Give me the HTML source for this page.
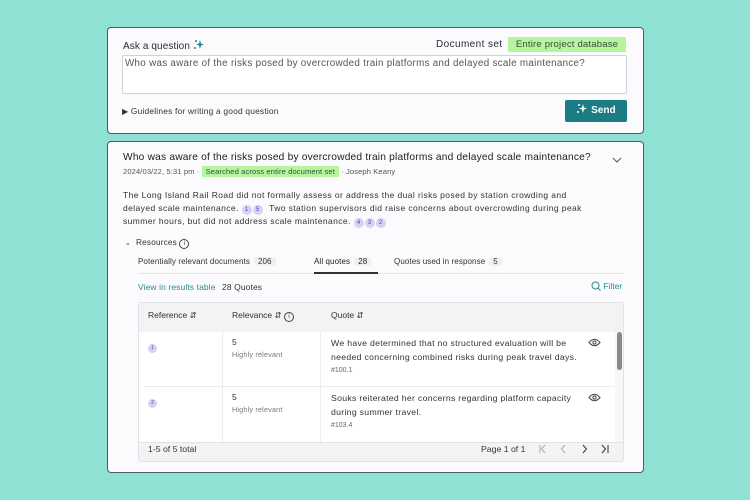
<!DOCTYPE html>
<html><head><meta charset="utf-8"><style>
*{box-sizing:border-box;margin:0;padding:0}
body{width:750px;height:500px;background:#8fe2d3;font-family:"Liberation Sans",sans-serif;color:#2b2b33;position:relative;overflow:hidden}
.card{position:absolute;background:#fbfafc;border:1px solid #4f5a5a;border-radius:4px}
.a{position:absolute;white-space:nowrap}
.badge{display:inline-block;width:10px;height:10px;border-radius:50%;background:#d9cff5;color:#5a3fa8;font-size:6px;text-align:center;line-height:10px;vertical-align:0px;margin-right:1px;letter-spacing:0}
.pill{display:inline-block;background:#eef0f2;border-radius:3px;padding:0 4px;margin-left:4px}
</style></head><body>
<div class="card" style="left:107px;top:27px;width:537px;height:107px"></div>
<div class="a" style="left:123px;top:39px;font-size:10px;letter-spacing:0.1px">Ask a question <svg width="12" height="11" viewBox="0 0 12 11" style="vertical-align:-1px"><path d="M7 1L8 4.5 11 5.5 8 6.5 7 10 6 6.5 3 5.5 6 4.5Z" fill="#1b8a8f"/><circle cx="3" cy="2" r="1" fill="#1b8a8f"/><circle cx="2" cy="9" r="1" fill="#1b8a8f"/></svg></div>
<div class="a" style="left:436px;top:39px;font-size:10px;letter-spacing:0.4px">Document set</div>
<div class="a" style="left:508px;top:37px;width:118px;height:15px;background:#b6f5a0;font-size:9.5px;line-height:15px;text-align:center;color:#3a4a3a;letter-spacing:0.2px">Entire project database</div>
<div class="a" style="left:122px;top:55px;width:505px;height:39px;background:#fff;border:1px solid #cfd2d6;border-radius:2px"></div>
<div class="a" style="left:125px;top:58px;font-size:9.8px;color:#555;letter-spacing:0.3px">Who was aware of the risks posed by overcrowded train platforms and delayed scale maintenance?</div>
<div class="a" style="left:122px;top:106px;font-size:8.4px;color:#333;letter-spacing:0.2px"><span style="font-size:8px">&#9654;</span> Guidelines for writing a good question</div>
<div class="a" style="left:565px;top:100px;width:62px;height:22px;background:#1b7c84;border-radius:2px;color:#fff;font-size:10px;font-weight:bold;line-height:22px;text-align:center"><svg width="12" height="11" viewBox="0 0 12 11" style="vertical-align:-1px"><path d="M7 1L8 4.5 11 5.5 8 6.5 7 10 6 6.5 3 5.5 6 4.5Z" fill="#fff"/><circle cx="3" cy="2" r="1" fill="#fff"/><circle cx="2" cy="9" r="1" fill="#fff"/></svg> Send</div>

<div class="card" style="left:107px;top:141px;width:537px;height:332px"></div>
<div class="a" style="left:123px;top:152px;font-size:10.2px;color:#222;letter-spacing:0.2px">Who was aware of the risks posed by overcrowded train platforms and delayed scale maintenance?</div>
<svg class="a" style="left:612px;top:157px" width="10" height="7"><path d="M1 1L5 5 9 1" fill="none" stroke="#555" stroke-width="1"/></svg>
<div class="a" style="left:123px;top:167px;font-size:7.6px;color:#555;line-height:10px;letter-spacing:0.1px">2024/03/22, 5:31 pm · <span style="background:#b6f5a0;padding:1px 4px;color:#355035">Searched across entire document set</span> · Joseph Keany</div>
<div class="a" style="left:123px;top:189px;font-size:8.5px;line-height:12.5px;color:#333;white-space:normal;width:475px;letter-spacing:0.4px">The Long Island Rail Road did not formally assess or address the dual risks posed by station crowding and delayed scale maintenance. <span class="badge">1</span><span class="badge">5</span> &nbsp;Two station supervisors did raise concerns about overcrowding during peak summer hours, but did not address scale maintenance. <span class="badge">4</span><span class="badge">3</span><span class="badge">2</span></div>
<div class="a" style="left:125px;top:238px;font-size:8.2px;color:#333;letter-spacing:0.2px"><span style="font-size:7px">&#8964;</span>&nbsp; Resources <span style="display:inline-block;width:10px;height:10px;border:1px solid #444;border-radius:50%;font-size:6px;text-align:center;line-height:9px">i</span></div>
<div class="a" style="left:138px;top:257px;font-size:8px;color:#333;letter-spacing:0.1px">Potentially relevant documents<span class="pill">206</span></div>
<div class="a" style="left:314px;top:257px;font-size:8px;color:#222;letter-spacing:0.1px">All quotes<span class="pill">28</span></div>
<div class="a" style="left:394px;top:257px;font-size:8px;color:#333;letter-spacing:0.1px">Quotes used in response<span class="pill">5</span></div>
<div class="a" style="left:138px;top:273px;width:486px;height:1px;background:#e6e6ea"></div>
<div class="a" style="left:314px;top:272px;width:64px;height:2px;background:#333"></div>
<div class="a" style="left:138px;top:282px;font-size:8.5px;color:#2a8a8f;letter-spacing:0.1px">View in results table <span style="color:#333;margin-left:4px">28 Quotes</span></div>
<div class="a" style="left:591px;top:281px;font-size:8.5px;color:#2a8a8f"><svg width="10" height="10" style="vertical-align:-2px"><circle cx="4.5" cy="4.5" r="3.5" fill="none" stroke="#2a8a8f" stroke-width="1"/><path d="M7 7L9.5 9.5" stroke="#2a8a8f"/></svg> Filter</div>

<div class="a" style="left:138px;top:302px;width:486px;height:160px;border:1px solid #e2e2e6;border-radius:3px;background:#fff;overflow:hidden">
 <div style="position:absolute;left:0;top:0;width:486px;height:29px;background:#f3f3f6"></div>
 <div style="position:absolute;left:0;top:139px;width:486px;height:21px;background:#f3f3f6;border-top:1px solid #e2e2e6"></div>
 <div style="position:absolute;left:5px;top:83px;width:470px;height:1px;background:#ececef"></div>
 <div style="position:absolute;left:83px;top:29px;width:1px;height:110px;background:#ececef"></div>
 <div style="position:absolute;left:181px;top:29px;width:1px;height:110px;background:#ececef"></div>
 <div style="position:absolute;left:476px;top:29px;width:10px;height:110px;background:#f7f7f8"></div>
 <div style="position:absolute;left:478px;top:29px;width:5px;height:38px;background:#8a8a8e;border-radius:3px"></div>
</div>
<div class="a" style="left:148px;top:310px;font-size:8.5px;color:#333">Reference &#8693;</div>
<div class="a" style="left:232px;top:310px;font-size:8.5px;color:#333">Relevance &#8693; <span style="display:inline-block;width:10px;height:10px;border:1px solid #444;border-radius:50%;font-size:6px;text-align:center;line-height:9px">i</span></div>
<div class="a" style="left:331px;top:310px;font-size:8.5px;color:#333">Quote &#8693;</div>

<div class="a" style="left:148px;top:336px"><span class="badge" style="width:9px;height:9px;line-height:9px;font-size:5px">1</span></div>
<div class="a" style="left:232px;top:337px;font-size:8.5px;color:#333">5</div>
<div class="a" style="left:232px;top:350px;font-size:7.2px;color:#777;letter-spacing:0.2px">Highly relevant</div>
<div class="a" style="left:331px;top:337px;font-size:8.7px;line-height:13.5px;color:#333;letter-spacing:0.3px">We have determined that no structured evaluation will be<br>needed concerning combined risks during peak travel days.</div>
<div class="a" style="left:331px;top:367px;font-size:7px;color:#666">#100.1</div>
<div class="a" style="left:148px;top:391px"><span class="badge" style="width:9px;height:9px;line-height:9px;font-size:5px">2</span></div>
<div class="a" style="left:232px;top:392px;font-size:8.5px;color:#333">5</div>
<div class="a" style="left:232px;top:405px;font-size:7.2px;color:#777;letter-spacing:0.2px">Highly relevant</div>
<div class="a" style="left:331px;top:392px;font-size:8.7px;line-height:13.5px;color:#333;letter-spacing:0.3px">Souks reiterated her concerns regarding platform capacity<br>during summer travel.</div>
<div class="a" style="left:331px;top:422px;font-size:7px;color:#666">#103.4</div>
<svg class="a" style="left:588px;top:338px" width="13" height="9"><path d="M1 4.5Q6.5-2 12 4.5Q6.5 11 1 4.5Z" fill="none" stroke="#444"/><circle cx="6.5" cy="4.5" r="1.6" fill="none" stroke="#444"/></svg>
<svg class="a" style="left:588px;top:393px" width="13" height="9"><path d="M1 4.5Q6.5-2 12 4.5Q6.5 11 1 4.5Z" fill="none" stroke="#444"/><circle cx="6.5" cy="4.5" r="1.6" fill="none" stroke="#444"/></svg>

<div class="a" style="left:148px;top:444px;font-size:8.7px;color:#333">1-5 of 5 total</div>
<div class="a" style="left:481px;top:444px;font-size:8.7px;color:#333">Page 1 of 1</div>
<svg class="a" style="left:538px;top:444px" width="80" height="10"><g fill="none" stroke-width="1"><path d="M2 1V9M7 1L3.5 5 7 9" stroke="#aaa"/><path d="M27 1L23.5 5 27 9" stroke="#aaa"/><path d="M45 1L48.5 5 45 9" stroke="#333"/><path d="M64 1L67.5 5 64 9M70 1V9" stroke="#333"/></g></svg>
</body></html>
